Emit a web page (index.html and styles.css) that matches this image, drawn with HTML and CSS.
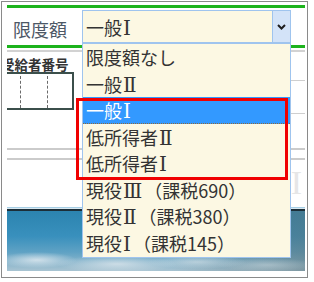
FILE: index.html
```html
<!DOCTYPE html>
<html lang="ja">
<head>
<meta charset="utf-8">
<title>限度額</title>
<link rel="stylesheet" href="styles.css">
</head>
<body>

<div class="screen">
	<div class="rule-green"></div>
	<div class="head">
		<span class="head-label">限度額</span>
	</div>
	<div class="rule-green"></div>
	<div class="rule-gray"></div>

	<div class="rows">
		<div class="col-left">
			<div class="caption">受給者番号</div>
			<div class="num-box">
				<div class="num-cell"></div>
				<div class="num-cell"></div>
				<div class="num-cell last"></div>
			</div>
		</div>
		<div class="col-right">
			<div class="row-line r1"></div>
			<div class="row-line r2"></div>
		</div>
	</div>

	<div class="rule-thin first"></div>
	<div class="rule-thin"></div>
	<div class="ghost">I</div>
	<div class="photo"></div>

	<!-- opened select, drawn over the form -->
	<div class="select">
		<span class="select-value">一般<span class="rn">Ⅰ</span></span>
		<span class="select-btn">
			<svg width="9" height="6" viewBox="0 0 9 6"><polyline points="1,1 4.5,4.5 8,1" fill="none" stroke="#1e1e1e" stroke-width="2"/></svg>
		</span>
	</div>
	<ul class="options">
		<li>限度額なし</li>
		<li>一般<span class="rn">Ⅱ</span></li>
		<li class="active">一般<span class="rn">Ⅰ</span></li>
		<li>低所得者<span class="rn">Ⅱ</span></li>
		<li>低所得者<span class="rn">Ⅰ</span></li>
		<li>現役<span class="rn">Ⅲ</span>（課税690）</li>
		<li>現役<span class="rn">Ⅱ</span>（課税380）</li>
		<li>現役<span class="rn">Ⅰ</span>（課税145）</li>
	</ul>
	<div class="mark"></div>
</div>

</body>
</html>
```

FILE: styles.css
```css
body {
	margin: 0;
	background: #FFFFFF;
	font-family: "Noto Sans CJK JP", sans-serif;
}
.screen {
	position: relative;
	box-sizing: border-box;
	width: 307px;
	height: 277px;
	margin: 1px 0 0 1px;
	padding: 3px 2px 0 5px;
	border: 1px solid #8A8A8A;
	background: #FFFFFF;
}
.rule-green {
	height: 3px;
	background: #1DB31D;
}
.rule-gray {
	height: 2px;
	margin-top: 2px;
	background: #D2D2D2;
}
.head {
	display: flex;
	align-items: center;
	height: 37px;
	padding: 4px 0 0 6px;
	box-sizing: border-box;
}
.head-label {
	font-size: 18px;
	line-height: 20px;
	color: #4D5866;
}
.rows {
	display: flex;
	height: 62px;
}
.col-left {
	width: 67px;
	overflow: hidden;
}
.caption {
	margin-top: 5px;
	font-size: 13.5px;
	font-weight: bold;
	line-height: 14px;
	text-indent: -6px;
	white-space: nowrap;
	color: #333333;
}
.num-box {
	display: flex;
	box-sizing: border-box;
	width: 67px;
	height: 38px;
	margin-top: 1px;
	border: 2px solid #3B4F4B;
	border-left: none;
}
.num-cell {
	width: 13px;
	margin-top: 2px;
	border-right: 1px dashed #6A6A6A;
}
.num-cell + .num-cell {
	width: 26px;
}
.num-cell.last {
	flex: 1;
	border-right: none;
}
.col-right {
	flex: 1;
	margin-left: 12px;
}
.row-line {
	border-bottom: 1px solid #CFCFCF;
}
.r1 {
	height: 28px;
}
.r2 {
	height: 32px;
}
.rule-thin {
	height: 2px;
	margin-top: 8px;
	background: #CBCBCB;
}
.rule-thin.first {
	margin-top: 34px;
}
.ghost {
	height: 47px;
	font-family: "Liberation Serif", serif;
	font-size: 34px;
	line-height: 46px;
	text-align: right;
	padding-right: 3px;
	color: #E6E6E6;
}
.photo {
	height: 63px;
	border-top: 1px solid #A6CFE6;
	background:
		linear-gradient(180deg, #D8E8F0 0, #D8E8F0 1px, #1C2E38 1px, #1C2E38 3px, transparent 3px),
		radial-gradient(ellipse 40px 8px at 30px 52px, rgba(235, 240, 244, 0.75), transparent),
		radial-gradient(ellipse 60px 9px at 110px 56px, rgba(230, 236, 240, 0.7), transparent),
		radial-gradient(ellipse 50px 7px at 190px 54px, rgba(220, 230, 235, 0.6), transparent),
		radial-gradient(ellipse 50px 7px at 260px 57px, rgba(200, 214, 220, 0.55), transparent),
		linear-gradient(90deg, rgba(0, 0, 0, 0) 55%, rgba(90, 115, 122, 0.55) 100%),
		linear-gradient(180deg, #2A82AE 0, #3990BD 45%, #5FA2C4 70%, #A9C4D2 100%);
}

/* select and its opened list */
.select {
	position: absolute;
	left: 80px;
	top: 8px;
	display: flex;
	box-sizing: border-box;
	width: 209px;
	height: 33px;
	border: 1px solid #9FC4EE;
	background: #FCF8E3;
}
.select-value {
	flex: 1;
	padding: 3px 0 0 3px;
	font-size: 18px;
	line-height: 26px;
	color: #333333;
}
.select-btn {
	display: flex;
	align-items: center;
	justify-content: center;
	width: 17px;
	border-left: 1px solid #9FC4EE;
	background: #D3E3F8;
}
.rn {
	font-family: "DejaVu Serif", "Noto Sans CJK JP", serif;
	font-size: 20px;
	line-height: 1;
	padding: 0 2px 0 1px;
}
.options {
	position: absolute;
	left: 80px;
	top: 41px;
	box-sizing: border-box;
	width: 209px;
	height: 215px;
	margin: 0;
	padding: 0;
	list-style: none;
	border: 1px solid #9FC4EE;
	background: #FCF8E3;
}
.options li {
	box-sizing: border-box;
	height: 26.5px;
	padding-left: 3px;
	font-size: 18px;
	line-height: 26px;
	white-space: nowrap;
	color: #333333;
}
.options li.active {
	background: #3399FF;
	border-bottom: 1px dotted #8A6A40;
	color: #FFFFFF;
}
.mark {
	position: absolute;
	left: 74px;
	top: 96px;
	box-sizing: border-box;
	width: 212px;
	height: 82px;
	border: 3px solid #F00000;
}
```
